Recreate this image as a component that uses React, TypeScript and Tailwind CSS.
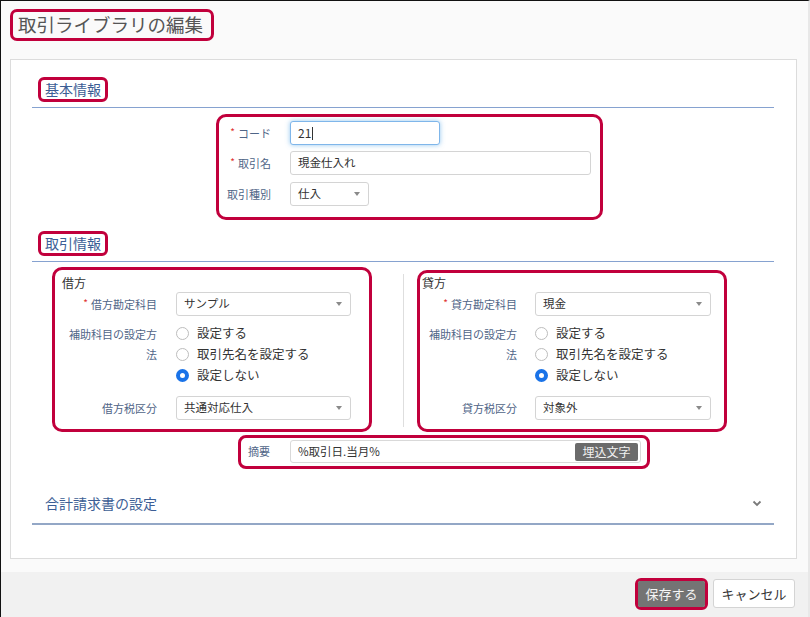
import React from 'react'

const RED = 'border-[3px] border-[#c1003c]'

function Caret() {
  return (
    <span className="w-0 h-0 border-l-[3.5px] border-r-[3.5px] border-t-[4px] border-l-transparent border-r-transparent border-t-[#8a8a8a]" />
  )
}

function Select({ value, className }: { value: string; className: string }) {
  return (
    <div
      className={`h-[24px] flex items-center justify-between border border-[#d4d4d4] rounded-[3px] bg-white pl-[7px] pr-[8px] text-[11.5px] text-[#333] ${className}`}
    >
      <span>{value}</span>
      <Caret />
    </div>
  )
}

function Radio({ label, checked }: { label: string; checked?: boolean }) {
  return (
    <div className="h-[21px] flex items-center gap-[8px] text-[12.5px] text-[#333]">
      {checked ? (
        <span className="w-[13px] h-[13px] rounded-full border-[4px] border-[#1a73e8] bg-white" />
      ) : (
        <span className="w-[13px] h-[13px] rounded-full border border-[#bdbdbd] bg-white" />
      )}
      <span>{label}</span>
    </div>
  )
}

function Req({ children }: { children: React.ReactNode }) {
  return (
    <>
      <span className="text-[#e0322f] text-[10px] mr-[3px] relative -top-[2px]">*</span>
      {children}
    </>
  )
}

function SectionHeader({ title }: { title: string }) {
  return (
    <div className="border-b border-[#86a2d0] pb-[5px]">
      <div className={`ml-[6px] inline-flex items-center h-[25px] w-[70px] rounded-[6px] ${RED} px-[4px] text-[14px] leading-[19px] text-[#3c5e95]`}>
        {title}
      </div>
    </div>
  )
}

function AccountColumn({
  title,
  account,
  taxLabel,
  tax,
  boxClass,
  rowClass,
  selectClass
}: {
  title: string
  account: string
  taxLabel: string
  tax: string
  boxClass: string
  rowClass: string
  selectClass: string
}) {
  const label = 'w-[90px] text-right text-[11px] leading-[20px] text-[#4f6587]'
  return (
    <div className={`rounded-[10px] ${RED} ${boxClass}`}>
      <div className="text-[12px] leading-[16px] text-[#333]">{title}</div>
      <div className={`mt-[1px] flex items-center ${rowClass}`}>
        <div className={label}>
          <Req>{title}勘定科目</Req>
        </div>
        <Select value={account} className={selectClass} />
      </div>
      <div className={`mt-[7px] flex items-start ${rowClass}`}>
        <div className={`${label} pt-[1px]`}>補助科目の設定方法</div>
        <div className="flex flex-col">
          <Radio label="設定する" />
          <Radio label="取引先名を設定する" />
          <Radio label="設定しない" checked />
        </div>
      </div>
      <div className={`mt-[10px] flex items-center ${rowClass}`}>
        <div className={label}>{taxLabel}</div>
        <Select value={tax} className={selectClass} />
      </div>
    </div>
  )
}

export default function App() {
  const formLabel = 'w-[44px] text-right text-[11px] leading-[16px] text-[#4f6587] whitespace-nowrap'

  return (
    <div className="w-full h-[617px] flex flex-col border-l border-t border-[#111] border-r-2 border-r-[#e8e8e8] font-['Noto_Sans_CJK_JP','Noto_Sans',sans-serif]">
      <div className="h-[571px] bg-[#fafafa] pt-[8px] pl-[9px]">
        <div className={`flex items-center h-[32px] w-[204px] rounded-[7px] ${RED} pl-[5px] text-[18.5px] text-[#555] whitespace-nowrap`}>
          取引ライブラリの編集
        </div>

        <div className="mt-[18px] w-[787px] h-[500px] border border-[#dcdcdc] bg-white pl-[21px] pr-[22px] pt-[16px]">
          <SectionHeader title="基本情報" />

          <div className={`mt-[6px] ml-[184px] w-[387px] h-[106px] rounded-[10px] ${RED} pl-[8px] pt-[4px]`}>
            <div className="flex items-center gap-[19px]">
              <div className={formLabel}>
                <Req>コード</Req>
              </div>
              <div className="h-[24px] w-[150px] flex items-center border border-[#7fb6ea] rounded-[3px] bg-white pl-[7px] text-[12px] text-[#333] shadow-[0_0_5px_rgba(102,175,233,0.7)]">
                21<span className="ml-[1px] w-px h-[13px] bg-[#333]" />
              </div>
            </div>
            <div className="mt-[6px] flex items-center gap-[19px]">
              <div className={formLabel}>
                <Req>取引名</Req>
              </div>
              <div className="h-[24px] w-[301px] flex items-center border border-[#d4d4d4] rounded-[3px] bg-white pl-[7px] text-[11.5px] text-[#333]">
                現金仕入れ
              </div>
            </div>
            <div className="mt-[7px] flex items-center gap-[19px]">
              <div className={formLabel}>取引種別</div>
              <Select value="仕入" className="w-[79px]" />
            </div>
          </div>

          <div className="mt-[10px]">
            <SectionHeader title="取引情報" />
          </div>

          <div className="flex items-start h-[170px]">
            <AccountColumn
              title="借方"
              account="サンプル"
              taxLabel="借方税区分"
              tax="共通対応仕入"
              boxClass="mt-[5px] ml-[20px] w-[320px] h-[165px] pt-[5px] pl-[7px]"
              rowClass="ml-[5px] gap-[19px]"
              selectClass="w-[175px]"
            />
            <div className="mt-[12px] ml-[31px] w-px h-[153px] bg-[#dedede]" />
            <AccountColumn
              title="貸方"
              account="現金"
              taxLabel="貸方税区分"
              tax="対象外"
              boxClass="mt-[8px] ml-[13px] w-[310px] h-[162px] pt-[2px] pl-[2px]"
              rowClass="ml-[5px] gap-[18px]"
              selectClass="w-[176px]"
            />
          </div>

          <div className={`mt-[3px] ml-[206px] w-[412px] h-[34px] rounded-[8px] ${RED} pl-[7px] pt-[2px] flex items-start gap-[20px]`}>
            <div className="w-[22px] h-[23px] flex items-center text-[11px] text-[#4f6587]">摘要</div>
            <div className="h-[23px] w-[351px] flex items-center justify-between border border-[#d9d9d9] rounded-[3px] bg-white pl-[7px] pr-[2px] text-[11.5px] text-[#333]">
              <span>%取引日.当月%</span>
              <span className="h-[18px] w-[63px] flex items-center justify-center bg-[#6b6b6b] text-[12px] text-[#f2f2f2] rounded-[2px]">
                埋込文字
              </span>
            </div>
          </div>

          <div className="mt-[24px] h-[32px] pb-[10px] border-b-2 border-[#93a7c6] flex items-center justify-between pl-[13px] pr-[12px]">
            <span className="text-[14px] leading-[20px] text-[#3c5e95]">合計請求書の設定</span>
            <svg width="10" height="7" viewBox="0 0 10 7" fill="none">
              <path d="M1.5 1.5l3.5 3.5 3.5-3.5" stroke="#7a7a7a" strokeWidth="1.8" />
            </svg>
          </div>
        </div>
      </div>

      <div className="flex-1 bg-[#f1f1f1] flex justify-end items-start pt-[6px] pr-[13px] gap-[5px]">
        <div className={`rounded-[6px] ${RED}`}>
          <div className="h-[26px] w-[67px] flex items-center justify-center bg-[#747474] text-[13px] text-[#f5f5f5] rounded-[2px]">
            保存する
          </div>
        </div>
        <div className="mt-[1px] h-[29px] w-[82px] flex items-center justify-center bg-white border border-[#d4d4d4] rounded-[3px] text-[13px] text-[#333]">
          キャンセル
        </div>
      </div>
    </div>
  )
}
